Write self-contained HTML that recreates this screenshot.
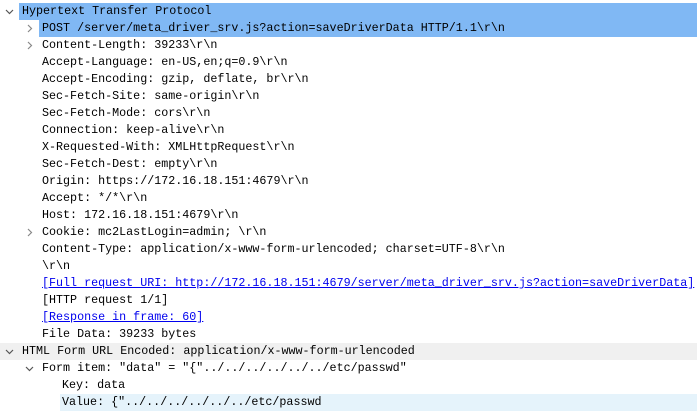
<!DOCTYPE html>
<html><head><style>
body{margin:0;width:697px;height:418px;overflow:hidden;background:#fff;position:relative;font-family:"Liberation Mono",monospace;font-size:11.7px;color:#000}
.r{position:absolute;left:0;right:0;height:17px;line-height:17px;white-space:pre}
.t{position:absolute;top:0}
.a{position:absolute;top:4px;width:9px;height:9px}
a{color:#0000ee;text-decoration:underline}
</style></head><body>
<div class="r" style="top:-14px"><span class="t" style="left:18px">[                                                                                               </span></div>
<div class="r" style="top:3px;background:#80b8f4;left:19px"></div>
<div class="r" style="top:20px;background:#80b8f4;left:39px"></div>
<div class="r" style="top:343px;background:#f0f0f0"></div>
<div class="r" style="top:394px;background:#e5f3fb;left:60px"></div>

<div class="r" style="top:3px"><svg class="a" style="left:5px" viewBox="0 0 9 9"><path d="M1 3l3.5 3.5L8 3" fill="none" stroke="#555" stroke-width="1.2"/></svg><span class="t" style="left:22px">Hypertext Transfer Protocol</span></div>
<div class="r" style="top:20px"><svg class="a" style="left:25px" viewBox="0 0 9 9"><path d="M3 1l3.5 3.5L3 8" fill="none" stroke="#888" stroke-width="1.2"/></svg><span class="t" style="left:42px">POST /server/meta_driver_srv.js?action=saveDriverData HTTP/1.1\r\n</span></div>
<div class="r" style="top:37px"><svg class="a" style="left:25px" viewBox="0 0 9 9"><path d="M3 1l3.5 3.5L3 8" fill="none" stroke="#888" stroke-width="1.2"/></svg><span class="t" style="left:42px">Content-Length: 39233\r\n</span></div>
<div class="r" style="top:54px"><span class="t" style="left:42px">Accept-Language: en-US,en;q=0.9\r\n</span></div>
<div class="r" style="top:71px"><span class="t" style="left:42px">Accept-Encoding: gzip, deflate, br\r\n</span></div>
<div class="r" style="top:88px"><span class="t" style="left:42px">Sec-Fetch-Site: same-origin\r\n</span></div>
<div class="r" style="top:105px"><span class="t" style="left:42px">Sec-Fetch-Mode: cors\r\n</span></div>
<div class="r" style="top:122px"><span class="t" style="left:42px">Connection: keep-alive\r\n</span></div>
<div class="r" style="top:139px"><span class="t" style="left:42px">X-Requested-With: XMLHttpRequest\r\n</span></div>
<div class="r" style="top:156px"><span class="t" style="left:42px">Sec-Fetch-Dest: empty\r\n</span></div>
<div class="r" style="top:173px"><span class="t" style="left:42px">Origin: https://172.16.18.151:4679\r\n</span></div>
<div class="r" style="top:190px"><span class="t" style="left:42px">Accept: */*\r\n</span></div>
<div class="r" style="top:207px"><span class="t" style="left:42px">Host: 172.16.18.151:4679\r\n</span></div>
<div class="r" style="top:224px"><svg class="a" style="left:25px" viewBox="0 0 9 9"><path d="M3 1l3.5 3.5L3 8" fill="none" stroke="#888" stroke-width="1.2"/></svg><span class="t" style="left:42px">Cookie: mc2LastLogin=admin; \r\n</span></div>
<div class="r" style="top:241px"><span class="t" style="left:42px">Content-Type: application/x-www-form-urlencoded; charset=UTF-8\r\n</span></div>
<div class="r" style="top:258px"><span class="t" style="left:42px">\r\n</span></div>
<div class="r" style="top:275px"><span class="t" style="left:42px"><a>[Full request URI: http://172.16.18.151:4679/server/meta_driver_srv.js?action=saveDriverData]</a></span></div>
<div class="r" style="top:292px"><span class="t" style="left:42px">[HTTP request 1/1]</span></div>
<div class="r" style="top:309px"><span class="t" style="left:42px"><a>[Response in frame: 60]</a></span></div>
<div class="r" style="top:326px"><span class="t" style="left:42px">File Data: 39233 bytes</span></div>
<div class="r" style="top:343px"><svg class="a" style="left:5px" viewBox="0 0 9 9"><path d="M1 3l3.5 3.5L8 3" fill="none" stroke="#555" stroke-width="1.2"/></svg><span class="t" style="left:22px">HTML Form URL Encoded: application/x-www-form-urlencoded</span></div>
<div class="r" style="top:360px"><svg class="a" style="left:25px" viewBox="0 0 9 9"><path d="M1 3l3.5 3.5L8 3" fill="none" stroke="#555" stroke-width="1.2"/></svg><span class="t" style="left:42px">Form item: "data" = "{"../../../../../../etc/passwd"</span></div>
<div class="r" style="top:377px"><span class="t" style="left:62px">Key: data</span></div>
<div class="r" style="top:394px"><span class="t" style="left:62px">Value: {"../../../../../../etc/passwd</span></div>
</body></html>
